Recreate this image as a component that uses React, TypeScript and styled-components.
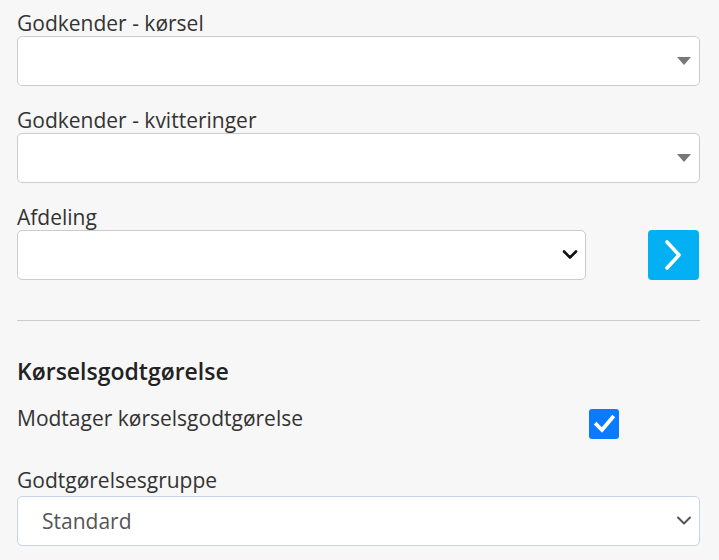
import React from "react";
import styled, { createGlobalStyle } from "styled-components";

const Global = createGlobalStyle`
  html, body { margin: 0; padding: 0; background: #f7f7f7; }
  body { font-family: "Open Sans", "Noto Sans", sans-serif; color: #333; }
  * { box-sizing: border-box; }
`;

const Page = styled.div`
  width: 719px;
  height: 560px;
  overflow: hidden;
  padding: 11px 19px 0 17px;
  display: flex;
  flex-direction: column;
`;

const Group = styled.div<{ $mb?: number }>`
  display: flex;
  flex-direction: column;
  margin-bottom: ${(p) => p.$mb ?? 22}px;
`;

const Label = styled.label<{ $gap?: number }>`
  font-size: 21px;
  line-height: 25px;
  color: #333;
  margin-bottom: ${(p) => p.$gap ?? 0}px;
`;

const Field = styled.div<{ $blue?: boolean }>`
  height: 50px;
  background: #fff;
  border: 1px solid ${(p) => (p.$blue ? "#c6d4e6" : "#cccccc")};
  border-radius: 5px;
  display: flex;
  align-items: center;
  justify-content: space-between;
  padding: 0 7px 0 24px;
  font-size: 21px;
  color: #555;
`;

const Caret = styled.span`
  width: 0;
  height: 0;
  border-left: 7.5px solid transparent;
  border-right: 7.5px solid transparent;
  border-top: 8px solid #777;
  margin-right: 1px;
`;

const Row = styled.div`
  display: flex;
  align-items: center;
  gap: 62px;
`;

const Grow = styled.div`
  flex: 1;
`;

const GoButton = styled.button`
  width: 51px;
  height: 50px;
  margin-right: 1px;
  border: none;
  border-radius: 4px;
  background: #02b0f3;
  display: flex;
  align-items: center;
  justify-content: center;
  padding: 0;
`;

const Rule = styled.hr`
  border: none;
  border-top: 1px solid #cccccc;
  margin: 40px 0 36px;
`;

const Heading = styled.h3`
  margin: 0 0 21px;
  font-size: 23px;
  line-height: 28px;
  font-weight: 600;
  color: #222;
`;

const CheckRow = styled.div`
  display: flex;
  align-items: flex-start;
  justify-content: space-between;
  padding-right: 81px;
  margin-bottom: 29px;
`;

const CheckText = styled.span`
  font-size: 21px;
  line-height: 25px;
  color: #333;
`;

const Box = styled.span`
  width: 30px;
  height: 30px;
  background: #0a7bff;
  border-radius: 3px;
  display: flex;
  align-items: center;
  justify-content: center;
  margin-top: 3px;
`;

const Chevron = ({ color, w = 2.6 }: { color: string; w?: number }) => (
  <svg width="16" height="12" viewBox="0 0 16 12">
    <path d="M2 2.5 L8 8.5 L14 2.5" fill="none" stroke={color} strokeWidth={w} strokeLinecap="round" strokeLinejoin="round" />
  </svg>
);

export default function App() {
  return (
    <>
      <Global />
      <Page>
        <Group>
          <Label>Godkender - kørsel</Label>
          <Field>
            <span />
            <Caret />
          </Field>
        </Group>
        <Group>
          <Label>Godkender - kvitteringer</Label>
          <Field>
            <span />
            <Caret />
          </Field>
        </Group>
        <Group $mb={0}>
          <Label>Afdeling</Label>
          <Row>
            <Grow>
              <Field>
                <span />
                <Chevron color="#111" />
              </Field>
            </Grow>
            <GoButton aria-label="Næste">
              <svg width="20" height="30" viewBox="0 0 20 30">
                <path d="M3 2 L15 15 L3 28" fill="none" stroke="#fff" strokeWidth="3.6" strokeLinecap="round" strokeLinejoin="round" />
              </svg>
            </GoButton>
          </Row>
        </Group>
        <Rule />
        <Heading>Kørselsgodtgørelse</Heading>
        <CheckRow>
          <CheckText>Modtager kørselsgodtgørelse</CheckText>
          <Box>
            <svg width="24" height="24" viewBox="0 0 24 24">
              <path d="M4.5 12.5 L10 18 L20.5 5.5" fill="none" stroke="#fff" strokeWidth="3.8" strokeLinecap="square" />
            </svg>
          </Box>
        </CheckRow>
        <Group $mb={0}>
          <Label $gap={3}>Godtgørelsesgruppe</Label>
          <Field $blue>
            <span>Standard</span>
            <Chevron color="#555" w={2} />
          </Field>
        </Group>
      </Page>
    </>
  );
}
